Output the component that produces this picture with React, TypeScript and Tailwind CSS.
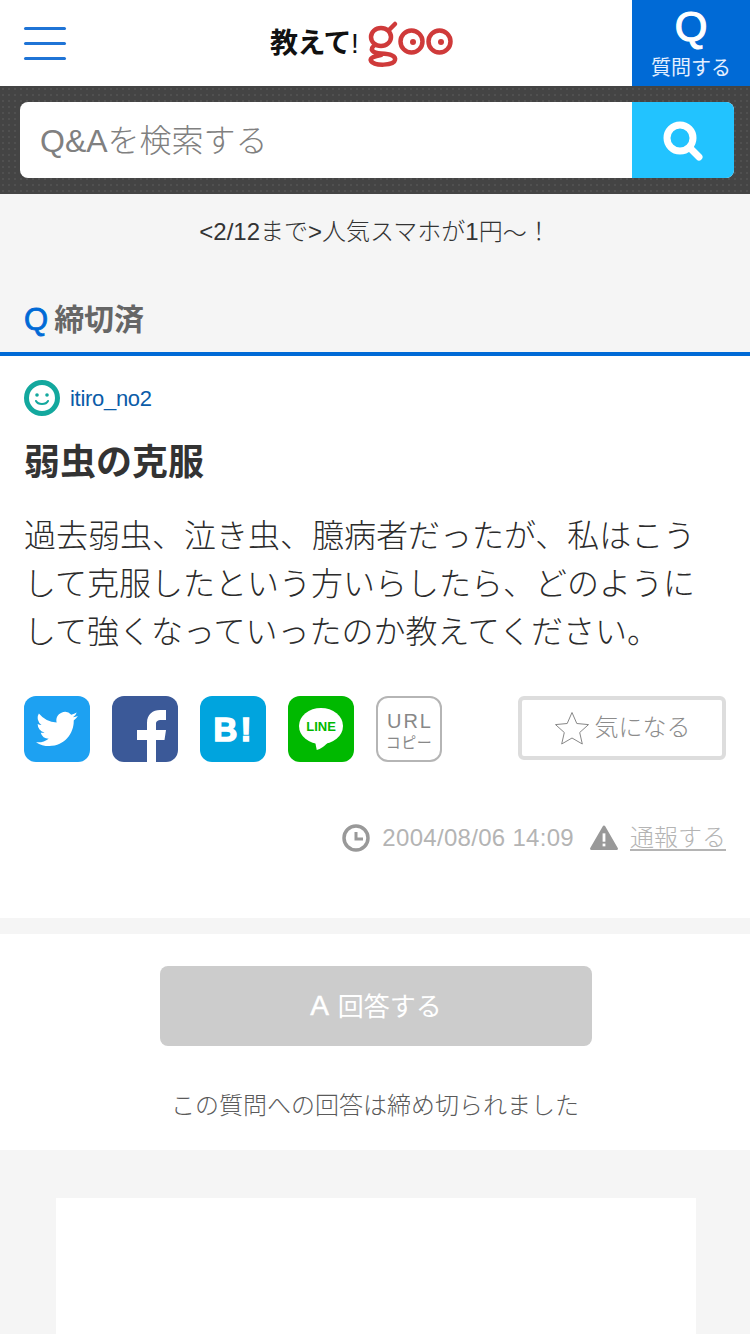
import React from "react";

const FONT = "font-['Liberation_Sans','Noto_Sans_CJK_JP',sans-serif]";

function Logo() {
  return (
    <div className="flex items-center h-[48px]">
      <span className="w-[97px] text-[28px] font-bold text-[#111] leading-none tracking-[-0.5px]">教えて<span className="font-normal">!</span></span>
      <svg width="88" height="48" viewBox="0 0 88 48" fill="none">
        <g stroke="#cf3a3a" strokeWidth="4.500">
          <ellipse cx="14" cy="17" rx="10" ry="9" />
          <path d="M22 10 L28 4" strokeLinecap="round" />
          <path d="M8 25 C2 29 5 33 14 33.500 C24 34 29 36 28 40 C27 46 7 46 4 41 C2 38 8 36 14 35" strokeLinecap="round" />
          <circle cx="44.500" cy="21.500" r="11" />
          <circle cx="72.500" cy="21.500" r="11" />
        </g>
        <circle cx="46" cy="22" r="3" fill="#cf3a3a" />
        <circle cx="74" cy="22" r="3" fill="#cf3a3a" />
      </svg>
    </div>
  );
}

function Share({ className, children }: { className: string; children: React.ReactNode }) {
  return <div className={`w-[66px] h-[66px] rounded-[12px] overflow-hidden flex items-center justify-center shrink-0 ${className}`}>{children}</div>;
}

export default function App() {
  return (
    <div className={`${FONT} font-light w-[750px] h-[1334px] overflow-hidden bg-[#f5f5f5] text-[#333]`}>
      <header className="h-[86px] bg-white flex items-center relative">
        <div className="ml-[24px] w-[42px] flex flex-col gap-[12px]">
          <div className="h-[3px] bg-[#1f74d6] rounded-full" />
          <div className="h-[3px] bg-[#1f74d6] rounded-full" />
          <div className="h-[3px] bg-[#1f74d6] rounded-full" />
        </div>
        <div className="absolute left-[270px] top-[20px]"><Logo /></div>
        <div className="ml-auto w-[118px] h-[86px] bg-[#006ad6] text-white flex flex-col items-center">
          <span className="text-[42px] font-normal [-webkit-text-stroke:1.200px_#fff] leading-[50px] mt-[2px]">Q</span>
          <span className="text-[20px] font-normal leading-[26px] mt-[3px] text-[#e4efff]">質問する</span>
        </div>
      </header>

      <div className="h-[108px] bg-[#444444] bg-[radial-gradient(#505050_1px,transparent_1px)] bg-[length:6px_6px] pt-[16px] pl-[20px] pr-[16px]">
        <div className="h-[76px] flex rounded-[8px] overflow-hidden bg-white">
          <div className="flex-1 flex items-center pl-[20px] pt-[2px] text-[32px] text-[#808080]">Q&amp;Aを検索する</div>
          <div className="w-[102px] bg-[#22c3ff] flex items-center justify-center">
            <svg width="40" height="40" viewBox="0 0 40 40" fill="none" stroke="#fff" className="mt-[1px]">
              <circle cx="17" cy="17" r="13" strokeWidth="7" />
              <path d="M27 27 L36 36" strokeWidth="7" strokeLinecap="round" />
            </svg>
          </div>
        </div>
      </div>

      <div className="h-[76px] flex items-center justify-center text-[24px] text-[#333]">&lt;2/12まで&gt;人気スマホが1円<span className="font-['Noto_Sans_CJK_KR']">～</span>！</div>

      <div className="h-[86px] border-b-[4px] border-[#006ad6] pl-[24px] flex items-end pb-[12px]">
        <span className="text-[31px] font-normal [-webkit-text-stroke:0.800px_#006ad6] leading-[40px] text-[#006ad6] mr-[6px]">Q</span>
        <span className="text-[30px] leading-[40px] font-bold text-[#666]">締切済</span>
      </div>

      <section className="h-[562px] bg-white px-[24px] pt-[24px]">
        <div className="flex items-center h-[36px]">
          <svg width="36" height="36" viewBox="0 0 36 36" fill="none">
            <circle cx="18" cy="18" r="15.500" stroke="#13a89e" strokeWidth="5" />
            <circle cx="13" cy="15" r="1.800" fill="#13a89e" />
            <circle cx="23" cy="15" r="1.800" fill="#13a89e" />
            <path d="M12 21 C14 25 22 25 24 21" stroke="#13a89e" strokeWidth="2" strokeLinecap="round" />
          </svg>
          <span className="ml-[10px] text-[22px] tracking-[-0.3px] text-[#0b5ca8]">itiro_no2</span>
        </div>
        <h1 className="mt-[25px] text-[36px] leading-[44px] font-bold text-[#333]">弱虫の克服</h1>
        <p className="mt-[27px] text-[32px] leading-[48px] text-[#2b2b2b]">過去弱虫、泣き虫、臆病者だったが、私はこうして克服したという方いらしたら、どのようにして強くなっていったのか教えてください。</p>

        <div className="mt-[40px] flex items-start h-[66px]">
          <div className="flex gap-[22px]">
            <Share className="bg-[#1da1f2]">
              <svg width="42" height="42" viewBox="0 0 24 24" fill="#fff"><path d="M23.950 4.570a10 10 0 0 1-2.820.770 4.960 4.960 0 0 0 2.160-2.720c-.950.550-2 .960-3.120 1.190a4.920 4.920 0 0 0-8.380 4.480A13.960 13.960 0 0 1 1.640 3.160a4.920 4.920 0 0 0 1.520 6.570 4.900 4.900 0 0 1-2.230-.610v.060a4.920 4.920 0 0 0 3.950 4.830 5 5 0 0 1-2.210.080 4.940 4.940 0 0 0 4.600 3.420A9.870 9.870 0 0 1 0 19.540a14 14 0 0 0 7.560 2.210c9.050 0 14-7.500 14-13.980 0-.210 0-.420-.020-.630a9.940 9.940 0 0 0 2.410-2.570z" /></svg>
            </Share>
            <Share className="bg-[#3b5998]">
              <svg width="66" height="66" viewBox="0 0 66 66" fill="#fff"><path d="M35 66V44H25V34h10v-7c0-9 6-13 13-13h6v10h-5c-3 0-5 1-5 4v6h10l-1.500 10H44v22z" /></svg>
            </Share>
            <Share className="bg-[#00a4de]">
              <span className="text-[33px] leading-none font-bold text-white tracking-[3px] ml-[2px] [-webkit-text-stroke:1.500px_#fff]">B!</span>
            </Share>
            <Share className="bg-[#00b900]">
              <div className="relative w-[44px] h-[42px] flex justify-center">
                <div className="w-[44px] h-[36px] bg-white rounded-[50%] flex items-center justify-center">
                  <span className="text-[13px] leading-none font-bold text-[#00b900]">LINE</span>
                </div>
                <svg width="14" height="9" viewBox="0 0 16 10" className="absolute left-[16px] top-[33px]"><path d="M0 0 H16 C12 5 6 9 2 10 Z" fill="#fff" /></svg>
              </div>
            </Share>
            <div className="w-[66px] h-[66px] rounded-[12px] border-2 border-[#b5b5b5] flex flex-col items-center text-[#888]">
              <span className="text-[20px] leading-[24px] mt-[11px] tracking-[2px] ml-[2px]">URL</span>
              <span className="text-[15px] font-normal leading-[18px] mt-[1px] tracking-[0.5px]">コピー</span>
            </div>
          </div>
          <div className="ml-auto w-[208px] h-[64px] rounded-[6px] border-[4px] border-[#dddddd] flex items-center justify-center text-[24px] text-[#8c8c8c]">
            <svg width="36" height="34" viewBox="0 0 36 34" fill="none" stroke="#888" strokeWidth="1" className="mr-[5px]">
              <path d="M18 1.500 L22.800 12.500 L34.500 13.600 L25.700 21.500 L28.300 33 L18 27 L7.700 33 L10.300 21.500 L1.500 13.600 L13.200 12.500 Z" strokeLinejoin="round" />
            </svg>
            <span>気になる</span>
          </div>
        </div>

        <div className="mt-[60px] flex items-center justify-end h-[32px] text-[24px] text-[#b4b4b4]">
          <svg width="28" height="28" viewBox="0 0 28 28" fill="none" stroke="#999" className="mr-[12px]">
            <circle cx="14" cy="14" r="12" strokeWidth="3.500" />
            <path d="M14 8 V15 H21" strokeWidth="3" />
          </svg>
          <span className="tracking-[0.3px]">2004/08/06 14:09</span>
          <svg width="28" height="26" viewBox="0 0 30 28" className="ml-[16px] mr-[12px]">
            <path d="M15 2 L28.500 25.500 H1.500 Z" fill="#999" stroke="#999" strokeWidth="3" strokeLinejoin="round" />
            <rect x="13.500" y="9" width="3" height="9" fill="#fff" />
            <rect x="13.500" y="20" width="3" height="3" fill="#fff" />
          </svg>
          <span className="underline underline-offset-[3px]">通報する</span>
        </div>
      </section>

      <section className="mt-[16px] h-[216px] bg-white pt-[32px] pl-[160px]">
        <div className="w-[432px] h-[80px] rounded-[8px] bg-[#cccccc] text-white flex items-center justify-center">
          <span className="text-[28px] font-normal [-webkit-text-stroke:0.500px_#fff] mr-[9px]">A</span>
          <span className="text-[26px] font-normal pt-[2px]">回答する</span>
        </div>
        <p className="mt-[42px] ml-[11px] text-[24px] leading-[36px] text-[#5a5a5a]">この質問への回答は締め切られました</p>
      </section>

      <div className="mt-[48px] ml-[56px] w-[640px] h-[200px] bg-white" />
    </div>
  );
}
